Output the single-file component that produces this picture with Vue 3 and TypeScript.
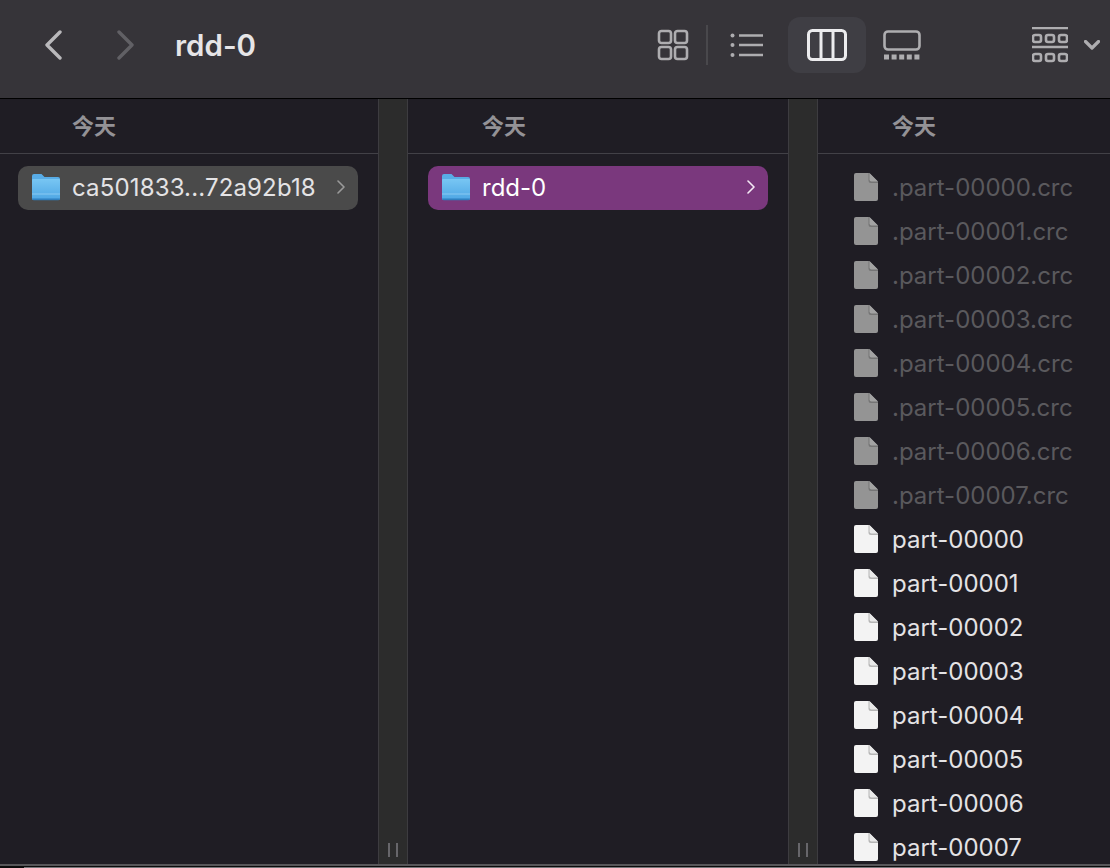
<script setup lang="ts">
const hiddenFiles: string[] = [0, 1, 2, 3, 4, 5, 6, 7].map((n) => `.part-0000${n}.crc`);
const files: string[] = [0, 1, 2, 3, 4, 5, 6, 7].map((n) => `part-0000${n}`);
</script>

<template>
  <div class="window">
    <header class="toolbar">
      <svg class="nav back" width="18" height="30" viewBox="0 0 18 30"><path d="M16 2 L3 15 L16 28" /></svg>
      <svg class="nav fwd" width="18" height="30" viewBox="0 0 18 30"><path d="M2 2 L15 15 L2 28" /></svg>
      <h1 class="title">rdd-0</h1>
      <div class="spacer"></div>
      <svg class="tool" width="32" height="32" viewBox="0 0 32 32">
        <rect x="2" y="2" width="12" height="12" rx="2.5" /><rect x="18" y="2" width="12" height="12" rx="2.5" />
        <rect x="2" y="18" width="12" height="12" rx="2.5" /><rect x="18" y="18" width="12" height="12" rx="2.5" />
      </svg>
      <div class="sep"></div>
      <svg class="tool list" width="34" height="24" viewBox="0 0 34 24">
        <circle cx="2.5" cy="2.5" r="2" class="fill" /><circle cx="2.5" cy="12" r="2" class="fill" /><circle cx="2.5" cy="22" r="2" class="fill" />
        <path d="M9 2.5H33M9 12H33M9 22H33" />
      </svg>
      <div class="active-view">
        <svg class="tool on" width="40" height="32" viewBox="0 0 40 32">
          <rect x="1.5" y="1.5" width="37" height="29" rx="4" /><path d="M14 2V30M26 2V30" />
        </svg>
      </div>
      <svg class="tool gallery" width="38" height="30" viewBox="0 0 38 30">
        <rect x="1.5" y="1.5" width="35" height="18" rx="3.5" />
        <path class="dots" d="M1 27H37" />
      </svg>
      <svg class="tool group" width="36" height="36" viewBox="0 0 36 36">
        <path d="M0 1H36M0 20H36" />
        <rect x="1" y="8" width="8" height="7" rx="2" /><rect x="14" y="8" width="8" height="7" rx="2" /><rect x="27" y="8" width="8" height="7" rx="2" />
        <rect x="1" y="27" width="8" height="7" rx="2" /><rect x="14" y="27" width="8" height="7" rx="2" /><rect x="27" y="27" width="8" height="7" rx="2" />
      </svg>
      <svg class="tool caret" width="16" height="10" viewBox="0 0 16 10"><path d="M1.5 1.5 L8 8 L14.5 1.5" /></svg>
    </header>

    <main class="browser">
      <section class="column first">
        <div class="col-head">今天</div>
        <div class="rows">
          <div class="row inactive">
            <svg class="icon" width="28" height="28" viewBox="0 0 28 28">
              <defs>
                <linearGradient id="folderA" x1="0" y1="0" x2="0" y2="1"><stop offset="0" stop-color="#78c6f3" /><stop offset="1" stop-color="#4ea6e4" /></linearGradient>
              </defs>
              <path class="folder-back" d="M0 3a2 2 0 0 1 2-2h7.5l3 3H26a2 2 0 0 1 2 2V25a2 2 0 0 1-2 2H2a2 2 0 0 1-2-2Z" />
              <path d="M0 7a1 1 0 0 1 1-1h26a1 1 0 0 1 1 1V25a2 2 0 0 1-2 2H2a2 2 0 0 1-2-2Z" style="fill: url(#folderA)" />
              <path class="folder-band" d="M0 20h28v2H0Z" />
              <path class="folder-base" d="M0 25.6a1.6 1.6 0 0 0 1.6 1.6H26.4a1.6 1.6 0 0 0 1.6-1.6Z" />
            </svg>
            <span class="name long">ca501833...72a92b18</span>
            <svg class="more" width="8" height="14" viewBox="0 0 8 14"><path d="M1 1 L7 7 L1 13" /></svg>
          </div>
        </div>
      </section>
      <div class="gutter"><i></i><i></i></div>

      <section class="column second">
        <div class="col-head">今天</div>
        <div class="rows">
          <div class="row selected">
            <svg class="icon" width="28" height="28" viewBox="0 0 28 28">
              <defs>
                <linearGradient id="folderB" x1="0" y1="0" x2="0" y2="1"><stop offset="0" stop-color="#78c6f3" /><stop offset="1" stop-color="#4ea6e4" /></linearGradient>
              </defs>
              <path class="folder-back" d="M0 3a2 2 0 0 1 2-2h7.5l3 3H26a2 2 0 0 1 2 2V25a2 2 0 0 1-2 2H2a2 2 0 0 1-2-2Z" />
              <path d="M0 7a1 1 0 0 1 1-1h26a1 1 0 0 1 1 1V25a2 2 0 0 1-2 2H2a2 2 0 0 1-2-2Z" style="fill: url(#folderB)" />
              <path class="folder-band" d="M0 20h28v2H0Z" />
              <path class="folder-base" d="M0 25.6a1.6 1.6 0 0 0 1.6 1.6H26.4a1.6 1.6 0 0 0 1.6-1.6Z" />
            </svg>
            <span class="name">rdd-0</span>
            <svg class="more" width="8" height="14" viewBox="0 0 8 14"><path d="M1 1 L7 7 L1 13" /></svg>
          </div>
        </div>
      </section>
      <div class="gutter"><i></i><i></i></div>

      <section class="column third">
        <div class="col-head">今天</div>
        <div class="rows">
          <div v-for="f in hiddenFiles" :key="f" class="row file hidden-file">
            <svg class="icon" width="24" height="28" viewBox="0 0 24 28">
              <path class="sheet" d="M2 0H15L24 9V26a2 2 0 0 1-2 2H2a2 2 0 0 1-2-2V2a2 2 0 0 1 2-2Z" />
              <path class="fold-shade" d="M15 0L24 9V10H17a2.5 2.5 0 0 1-2.5-2.5V0Z" />
              <path class="fold" d="M15.5 0L24 8.5H17.5a2 2 0 0 1-2-2Z" />
            </svg>
            <span class="name">{{ f }}</span>
          </div>
          <div v-for="f in files" :key="f" class="row file">
            <svg class="icon" width="24" height="28" viewBox="0 0 24 28">
              <path class="sheet" d="M2 0H15L24 9V26a2 2 0 0 1-2 2H2a2 2 0 0 1-2-2V2a2 2 0 0 1 2-2Z" />
              <path class="fold-shade" d="M15 0L24 9V10H17a2.5 2.5 0 0 1-2.5-2.5V0Z" />
              <path class="fold" d="M15.5 0L24 8.5H17.5a2 2 0 0 1-2-2Z" />
            </svg>
            <span class="name">{{ f }}</span>
          </div>
        </div>
      </section>
    </main>
    <footer class="edge"><div class="edge-line"></div></footer>
  </div>
</template>

<style scoped>
.window {
  width: 1110px;
  height: 868px;
  display: flex;
  flex-direction: column;
  overflow: hidden;
  background: #1f1d24;
  font-family: Inter, "Liberation Sans", "Noto Sans CJK SC", sans-serif;
}
.toolbar {
  flex: none;
  height: 98px;
  box-sizing: border-box;
  display: flex;
  align-items: center;
  padding: 0 10px 8px 44px;
  background: #363439;
}
svg { display: block; flex: none; }
.nav path, .tool path, .tool rect, .more path { fill: none; }
.nav path { stroke-width: 3.4; stroke-linecap: round; stroke-linejoin: round; }
.back path { stroke: #b9b8bb; }
.fwd { margin-left: 55px; }
.fwd path { stroke: #616065; }
.title {
  margin: 0 0 0 40px;
  font-size: 29.5px;
  font-weight: 600;
  color: #e6e5e7;
}
.spacer { flex: 1; }
.tool path, .tool rect { stroke: #aeadb0; stroke-width: 2.6; }
.tool .fill { fill: #aeadb0; }
.sep { width: 2px; height: 40px; margin: 0 22px 0 17px; background: #49484c; }
.active-view {
  width: 78px;
  height: 56px;
  margin: 0 17px 0 24px;
  border-radius: 12px;
  background: #3f3e44;
  display: flex;
  align-items: center;
  justify-content: center;
}
.on rect, .on path { stroke: #ececee; stroke-width: 3; }
.gallery .dots { stroke-width: 5; stroke-dasharray: 5 2.6; }
.group { margin-left: 111px; }
.caret { margin-left: 16px; }
.caret path { stroke-width: 3.2; stroke-linecap: round; stroke-linejoin: round; }
.browser {
  flex: 1;
  min-height: 0;
  display: flex;
  border-top: 1px solid #000;
}
.column { flex: none; min-width: 0; overflow: hidden; }
.first { width: 378px; }
.second { width: 380px; }
.third { flex: 1; }
.col-head {
  height: 55px;
  box-sizing: border-box;
  border-bottom: 1px solid #424147;
  padding-left: 72px;
  font-size: 22px;
  line-height: 54px;
  font-weight: 700;
  color: #939296;
}
.second .col-head, .third .col-head { padding-left: 74px; }
.gutter {
  flex: none;
  width: 30px;
  box-sizing: border-box;
  border-left: 1px solid #3d3c40;
  border-right: 1px solid #3d3c40;
  background: #2c2c2c;
  display: flex;
  align-items: flex-end;
  justify-content: center;
  gap: 6px;
  padding-bottom: 7px;
}
.gutter i { width: 2px; height: 14px; background: #67666a; }
.rows { padding: 12px 20px 0 18px; }
.second .rows { padding: 12px 20px 0 20px; }
.third .rows { padding: 12px 0 0 36px; }
.row {
  height: 44px;
  box-sizing: border-box;
  padding: 0 13px 2px 14px;
  display: flex;
  align-items: center;
  border-radius: 10px;
  font-size: 24px;
  color: #e4e3e5;
  white-space: nowrap;
}
.row .name { margin-left: 12px; flex: 1; }
.row .long { letter-spacing: 0.15px; }
.file { padding: 0 0 2px; }
.file .name { margin-left: 14px; }
.inactive { background: #4a4a4a; }
.selected { background: #7a387d; color: #fff; }
.more path { stroke: #9a9a9a; stroke-width: 1.6; stroke-linecap: round; stroke-linejoin: round; }
.selected .more path { stroke: #f4e9f5; }
.folder-back { fill: #58ace6; }
.folder-band { fill: #7cc2ef; opacity: 0.7; }
.folder-base { fill: #2f7fbf; }
.sheet { fill: #f3f3f3; }
.fold-shade { fill: #b5b5b5; }
.fold { fill: #e9e9e9; }
.hidden-file { color: #5a595d; }
.hidden-file .sheet { fill: #949494; }
.hidden-file .fold-shade { fill: #757575; }
.hidden-file .fold { fill: #a3a3a3; }
.edge {
  flex: none;
  height: 4px;
  box-sizing: border-box;
  border-top: 2px solid #58575a;
  background: #0c0c0c;
  padding: 1px 0 0 24px;
}
.edge-line { height: 1px; background: #77767a; }
</style>
